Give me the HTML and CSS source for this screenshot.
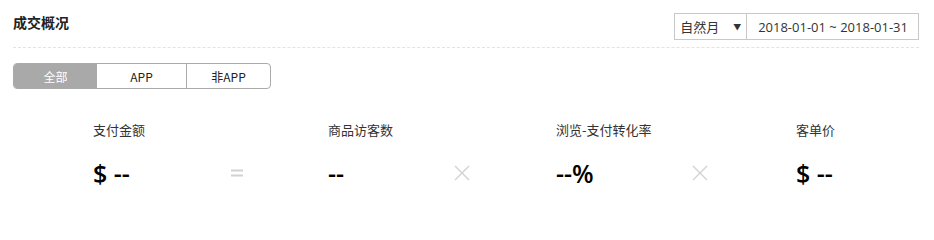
FILE: index.html
```html
<!DOCTYPE html>
<html lang="zh-CN">
<head>
<meta charset="utf-8">
<title>成交概况</title>
<link rel="stylesheet" href="styles.css">
</head>
<body>
<div class="panel">
  <div class="header">
    <h2 class="title">成交概况</h2>
    <div class="range">
      <div class="select"><span>自然月</span><span class="caret">▼</span></div>
      <div class="dates">2018-01-01 ~ 2018-01-31</div>
    </div>
  </div>
  <div class="tabs">
    <div class="tab tab-active">全部</div>
    <div class="tab tab-mid">APP</div>
    <div class="tab tab-last">非APP</div>
  </div>
  <div class="metrics">
    <div class="metric m1">
      <div class="label">支付金额</div>
      <div class="value">$ --</div>
    </div>
    <div class="op">
      <svg width="14" height="8" viewBox="0 0 14 8"><path d="M1 1.5H13M1 6.5H13" stroke="#cfd2d0" stroke-width="2"/></svg>
    </div>
    <div class="metric m2">
      <div class="label">商品访客数</div>
      <div class="value">--</div>
    </div>
    <div class="op">
      <svg width="16" height="16" viewBox="0 0 16 16"><path d="M1 1L15 15M15 1L1 15" stroke="#cfd4cf" stroke-width="1.4"/></svg>
    </div>
    <div class="metric m3">
      <div class="label">浏览-支付转化率</div>
      <div class="value">--%</div>
    </div>
    <div class="op">
      <svg width="16" height="16" viewBox="0 0 16 16"><path d="M1 1L15 15M15 1L1 15" stroke="#cfd4cf" stroke-width="1.4"/></svg>
    </div>
    <div class="metric m4">
      <div class="label">客单价</div>
      <div class="value">$ --</div>
    </div>
  </div>
</div>
</body>
</html>
```
FILE: styles.css
```css
html, body {
  margin: 0;
  padding: 0;
  background: #fff;
}
body {
  font-family: "Open Sans", "Noto Sans CJK SC", sans-serif;
  color: #333;
}
.panel {
  padding: 13px 15px 0 13px;
}
.header {
  display: flex;
  justify-content: space-between;
  align-items: flex-start;
  border-bottom: 1px dashed #e3e3e3;
  height: 34px;
}
.title {
  margin: 0;
  font-family: "Noto Sans CJK SC", sans-serif;
  font-size: 14px;
  font-weight: 700;
  line-height: 18px;
  color: #222;
}
.range {
  display: flex;
  height: 27px;
  border: 1px solid #c8c8c8;
  box-sizing: border-box;
  font-size: 13px;
  color: #333;
}
.select {
  width: 72px;
  box-sizing: border-box;
  display: flex;
  align-items: center;
  justify-content: space-between;
  padding: 0 5px 0 5px;
  border-right: 1px solid #c8c8c8;
  font-family: "Noto Sans CJK SC", sans-serif;
}
.caret {
  font-size: 8px;
  color: #333;
}
.dates {
  display: flex;
  align-items: center;
  padding: 0 10px 0 11px;
  font-family: "Open Sans", sans-serif;
  font-size: 13px;
  color: #333;
}
.tabs {
  display: flex;
  margin-top: 15px;
  width: 258px;
  height: 26px;
  border: 1px solid #aaa;
  border-radius: 4px;
  box-sizing: border-box;
  overflow: hidden;
  font-size: 12px;
}
.tab {
  display: flex;
  align-items: center;
  justify-content: center;
  color: #222;
  font-family: "Noto Sans CJK SC", sans-serif;
}
.tab-active {
  width: 83px;
  background: #a9a9a9;
  color: #fff;
}
.tab-mid {
  width: 89px;
  border-right: 1px solid #aaa;
}
.tab-last {
  flex: 1;
}
.metrics {
  display: flex;
  align-items: flex-start;
  padding-left: 80px;
  margin-top: 32px;
}
.metric {
  flex: none;
}
.m1 { width: 132px; }
.m2 { width: 122px; margin-left: 79px; }
.m3 { width: 132px; margin-left: 82px; }
.m4 { margin-left: 84px; }
.label {
  font-family: "Noto Sans CJK SC", sans-serif;
  font-size: 13px;
  line-height: 18px;
  color: #333;
}
.value {
  margin-top: 18px;
  font-family: "Open Sans", "Noto Sans CJK SC", sans-serif;
  font-size: 25px;
  font-weight: 600;
  line-height: 32px;
  color: #000;
}
.op {
  width: 24px;
  flex: none;
  display: flex;
  justify-content: center;
  align-items: center;
  height: 32px;
  margin-top: 36px;
}
```
